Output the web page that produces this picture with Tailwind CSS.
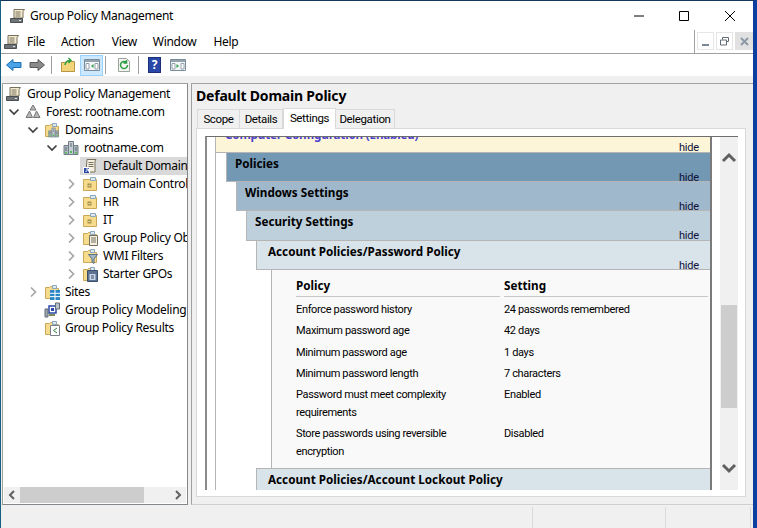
<!doctype html>
<html lang="en">
  <head>
    <meta charset="UTF-8" />
    <title>Group Policy Management</title>
    <script src="https://cdn.jsdelivr.net/npm/@tailwindcss/browser@4"></script>
  </head>
  <body class="w-[757px] h-[528px] overflow-hidden bg-white font-['Noto_Sans',sans-serif] text-[12px] tracking-[-0.3px] text-black">
    <svg class="hidden" xmlns="http://www.w3.org/2000/svg">
      <symbol id="scroll" viewBox="0 0 16 16">
        <path d="M4 1.500h10.500L13 3.500V10H4z" fill="#f3ead0" stroke="#77705c" />
        <path d="M5.500 4h5M5.500 6h5M5.500 8h5" stroke="#77705c" />
        <path d="M.5 10.500h12v4H.5z" fill="#6e7478" stroke="#4b4f52" />
        <path d="M9 12.500h2" stroke="#e8e8e8" />
      </symbol>
      <symbol id="folder" viewBox="0 0 16 16">
        <path d="M1.500 3.500h4l1-1h5v2h3v10h-13z" fill="#f6dc8c" stroke="#c9a858" />
        <path d="M8.500 1.500h4v3h-4z" fill="#dfe8f0" stroke="#8ba7bd" />
      </symbol>
      <symbol id="ou" viewBox="0 0 16 16">
        <path d="M1.500 3.500h13v11h-13z" fill="#f6dc8c" stroke="#c9a858" />
        <path d="M8.500 1.500h5v3h-5z" fill="#dfe8f0" stroke="#8ba7bd" />
        <path d="M5.500 7.500h4v4h-4z" fill="#a8924e" />
        <path d="M6.500 9h2v1h-2z" fill="#f3e3aa" />
      </symbol>
      <symbol id="server" viewBox="0 0 16 16">
        <path d="M5.500 1.500h5v13h-5z" fill="#c4cdd3" stroke="#6f7c85" />
        <path d="M1 5.500h4.500v9H1zM10.500 5.500H15v9h-4.500z" fill="#aeb9c0" stroke="#6f7c85" />
        <path d="M7 4h2M7 6h2M2 8h2M12 8h2M2 10h2M12 10h2" stroke="#5d6a73" />
        <path d="M7 11h2v2H7zM2 12h2v1.500H2zM12 12h2v1.500h-2z" fill="#4fc04f" />
      </symbol>
      <symbol id="chev-r" viewBox="0 0 16 16">
        <path d="M6 3.500 10.500 8 6 12.500" fill="none" stroke="#a6a6a6" stroke-width="1.700" />
      </symbol>
      <symbol id="chev-d" viewBox="0 0 16 16">
        <path d="M3.500 5.500 8 10l4.500-4.500" fill="none" stroke="#404040" stroke-width="1.700" />
      </symbol>
      <symbol id="panel" viewBox="0 0 16 16">
        <path d="M.5 2.500h15v11H.5z" fill="#f4f6f8" stroke="#7b8c98" />
        <path d="M1 3h14v2H1z" fill="#93a3ae" />
        <path d="M2 6.500h3v5.500H2zM11 6.500h3v5.500h-3z" fill="#fff" stroke="#93a3ae" />
      </symbol>
    </svg>

    <div class="flex flex-col h-[528px] border-l border-l-[#16607f] border-t border-t-[#12385e] border-r-4 border-r-[#0b3fa0]">
      <!-- title bar -->
      <div class="flex items-center h-[29px] shrink-0 pl-[9px]">
        <svg class="w-4 h-4 mr-[4px] shrink-0"><use href="#scroll" /></svg>
        <span>Group Policy Management</span>
        <div class="ml-auto flex items-center">
          <svg class="w-[46px] h-[29px]" viewBox="0 0 46 29"><path d="M19 15h10" stroke="#000" /></svg>
          <svg class="w-[46px] h-[29px]" viewBox="0 0 46 29"><path d="M18.500 10.500h9v9h-9z" fill="none" stroke="#000" /></svg>
          <svg class="w-[46px] h-[29px]" viewBox="0 0 46 29"><path d="M18 10l10 10M28 10 18 20" stroke="#000" /></svg>
        </div>
      </div>

      <!-- menu -->
      <div class="flex h-[24px] shrink-0">
        <div class="flex flex-1 items-center pl-[3px] border-b border-r border-[#a0a0a0] h-[24px]">
          <svg class="w-4 h-4 mr-[7px] shrink-0"><use href="#scroll" /></svg>
          <span class="mr-[16px]">File</span>
          <span class="mr-[17px]">Action</span>
          <span class="mr-[16px]">View</span>
          <span class="mr-[17px]">Window</span>
          <span>Help</span>
        </div>
        <div class="flex gap-[2px] pl-[2px] pt-[2px] w-[58px] border-b border-[#a0a0a0]">
          <div class="w-[17px] h-[18px] border border-[#e6e6e6] flex items-end justify-center pb-[3px]"><div class="w-[7px] h-[2px] bg-[#7b8794]"></div></div>
          <div class="w-[17px] h-[18px] border border-[#e6e6e6] flex items-center justify-center">
            <svg class="w-[9px] h-[9px]" viewBox="0 0 9 9"><path d="M2.500 2.500v-2h6v4h-2M.5 3h6v5H.5z" fill="none" stroke="#5f6b76" /></svg>
          </div>
          <div class="w-[18px] h-[18px] bg-[#e1e1e1] flex items-center justify-center">
            <svg class="w-[9px] h-[9px]" viewBox="0 0 9 9"><path d="M1 1l7 7M8 1 1 8" stroke="#8d99a4" stroke-width="2" /></svg>
          </div>
        </div>
      </div>

      <!-- toolbar -->
      <div class="flex items-center h-[22px] shrink-0 pl-[5px]">
        <svg class="w-4 h-4" viewBox="0 0 16 16"><path d="M.5 8 7 2.500v3h8v5H7v3z" fill="#4aa3e6" stroke="#1d6fb5" /></svg>
        <svg class="w-4 h-4 ml-[7px]" viewBox="0 0 16 16"><path d="M15.500 8 9 2.500v3H1v5h8v3z" fill="#8a8a8a" stroke="#5a5a5a" /></svg>
        <div class="w-px h-[18px] bg-[#a0a0a0] ml-[6px]"></div>
        <svg class="w-4 h-4 ml-[8px]" viewBox="0 0 16 16"><path d="M1.500 5.500h5l1-1h7v10h-13z" fill="#f3d47a" stroke="#b59643" /><path d="M5 8c.5-3 2.500-4.500 5-4.500M8.500 1l2.500 2.500L8.500 6" fill="none" stroke="#2f9e44" stroke-width="1.500" /></svg>
        <div class="flex items-center justify-center w-[23px] h-[21px] ml-[4px] bg-[#cce8ff] border border-[#99d1ff]">
          <svg class="w-4 h-4" viewBox="0 0 16 16"><use href="#panel" /><path d="M9.500 7v4L7 9z" fill="#2f9e44" /></svg>
        </div>
        <div class="w-px h-[18px] bg-[#a0a0a0] ml-[2px]"></div>
        <svg class="w-4 h-4 ml-[10px]" viewBox="0 0 16 16"><path d="M2.500 1.500h8l3 3v10h-11z" fill="#f4f6f4" stroke="#9aa29a" /><path d="M11.500 8a3.500 3.500 0 1 1-1.200-2.600M10.500 3v3h-3" fill="none" stroke="#2f9e44" stroke-width="1.500" /></svg>
        <div class="w-px h-[18px] bg-[#a0a0a0] ml-[6px]"></div>
        <div class="flex items-center justify-center w-[13px] h-[16px] ml-[9px] bg-[#2a48a8] border border-[#1b2f78] text-white text-[12px] font-bold leading-none">?</div>
        <svg class="w-4 h-4 ml-[9px]" viewBox="0 0 16 16"><use href="#panel" /><path d="M6.500 7v4L9 9z" fill="#2f9e44" /></svg>
      </div>

      <!-- panes -->
      <div class="flex flex-1 min-h-0 bg-[#f0f0f0] pt-[7px] pl-px gap-[3px]">
        <!-- tree -->
        <div class="flex flex-col w-[186px] shrink-0 h-[422px] bg-white border border-[#82878c] border-t-[#a0a0a0] border-l-[#a0a0a0]">
          <div class="flex-1 overflow-hidden pt-px whitespace-nowrap">
            <div class="flex items-center h-[18px] pl-[3px]"><svg class="w-4 h-4 mr-[5px] shrink-0"><use href="#scroll" /></svg><span>Group Policy Management</span></div>
            <div class="flex items-center h-[18px] pl-[3px]">
              <svg class="w-4 h-4 mr-[3px] shrink-0"><use href="#chev-d" /></svg>
              <svg class="w-4 h-4 mr-[5px] shrink-0" viewBox="0 0 16 16"><path d="M8 1l3 5H5zM4.500 7l3 6.500H1zM11.500 7l3.500 6.500H8.500z" fill="#b7b7b7" stroke="#767676" /></svg>
              <span>Forest: rootname.com</span>
            </div>
            <div class="flex items-center h-[18px] pl-[22px]">
              <svg class="w-4 h-4 mr-[3px] shrink-0"><use href="#chev-d" /></svg>
              <div class="relative w-4 h-4 mr-[5px] shrink-0"><svg class="w-4 h-4"><use href="#folder" /></svg><svg class="absolute left-[4px] top-[5px] w-[11px] h-[11px]"><use href="#server" /></svg></div>
              <span>Domains</span>
            </div>
            <div class="flex items-center h-[18px] pl-[41px]">
              <svg class="w-4 h-4 mr-[3px] shrink-0"><use href="#chev-d" /></svg>
              <svg class="w-4 h-4 mr-[5px] shrink-0"><use href="#server" /></svg>
              <span>rootname.com</span>
            </div>
            <div class="flex items-center h-[18px] ml-[77px] pl-[2px] bg-[#d9d9d9]">
              <svg class="w-4 h-4 mr-[5px] shrink-0" viewBox="0 0 16 16"><path d="M5 1.500h9l-1 1.500v11H4z" fill="#f3f0e2" stroke="#77705c" /><path d="M6.500 4.500h5M6.500 6.500h5M6.500 8.500h5" stroke="#77705c" /><path d="M1 9h7v6H1z" fill="#fff" /><path d="M2 10h5v5H2z" fill="#2a48a8" /><path d="M3.500 14 6 11.500M4 11h2.500v2.500" stroke="#fff" fill="none" /></svg>
              <span>Default Domain Policy</span>
            </div>
            <div class="flex items-center h-[18px] pl-[60px]">
              <svg class="w-4 h-4 mr-[3px] shrink-0"><use href="#chev-r" /></svg>
              <svg class="w-4 h-4 mr-[5px] shrink-0"><use href="#ou" /></svg>
              <span>Domain Controllers</span>
            </div>
            <div class="flex items-center h-[18px] pl-[60px]">
              <svg class="w-4 h-4 mr-[3px] shrink-0"><use href="#chev-r" /></svg>
              <svg class="w-4 h-4 mr-[5px] shrink-0"><use href="#ou" /></svg>
              <span>HR</span>
            </div>
            <div class="flex items-center h-[18px] pl-[60px]">
              <svg class="w-4 h-4 mr-[3px] shrink-0"><use href="#chev-r" /></svg>
              <svg class="w-4 h-4 mr-[5px] shrink-0"><use href="#ou" /></svg>
              <span>IT</span>
            </div>
            <div class="flex items-center h-[18px] pl-[60px]">
              <svg class="w-4 h-4 mr-[3px] shrink-0"><use href="#chev-r" /></svg>
              <div class="relative w-4 h-4 mr-[5px] shrink-0"><svg class="w-4 h-4"><use href="#folder" /></svg><svg class="absolute left-[6px] top-[5px] w-[10px] h-[11px]" viewBox="0 0 10 11"><path d="M1.500.5h8v10h-8z" fill="#f3f0e2" stroke="#77705c" /><path d="M3 3h5M3 5h5M3 7h5" stroke="#77705c" /></svg></div>
              <span>Group Policy Objects</span>
            </div>
            <div class="flex items-center h-[18px] pl-[60px]">
              <svg class="w-4 h-4 mr-[3px] shrink-0"><use href="#chev-r" /></svg>
              <div class="relative w-4 h-4 mr-[5px] shrink-0"><svg class="w-4 h-4"><use href="#folder" /></svg><svg class="absolute left-[6px] top-[6px] w-[10px] h-[10px]" viewBox="0 0 10 10"><path d="M.5.5h9L6 5v4.500L4 8V5z" fill="#9fb4c4" stroke="#5f7484" /></svg></div>
              <span>WMI Filters</span>
            </div>
            <div class="flex items-center h-[18px] pl-[60px]">
              <svg class="w-4 h-4 mr-[3px] shrink-0"><use href="#chev-r" /></svg>
              <div class="relative w-4 h-4 mr-[5px] shrink-0"><svg class="w-4 h-4"><use href="#folder" /></svg><svg class="absolute left-[5px] top-[4px] w-[11px] h-[12px]" viewBox="0 0 11 12"><path d="M.5.5h10v11H.5z" fill="#5c7394" stroke="#3d4f6b" /><path d="M2.500 4h6v6h-6z" fill="#c9d6e6" /><path d="M4 6h3M4 8h3" stroke="#3d4f6b" /></svg></div>
              <span>Starter GPOs</span>
            </div>
            <div class="flex items-center h-[18px] pl-[22px]">
              <svg class="w-4 h-4 mr-[3px] shrink-0"><use href="#chev-r" /></svg>
              <div class="relative w-4 h-4 mr-[5px] shrink-0"><svg class="w-4 h-4"><use href="#folder" /></svg><svg class="absolute left-[6px] top-[6px] w-[10px] h-[10px]" viewBox="0 0 10 10"><path d="M0 0h10v10H0z" fill="#2b86c5" /><path d="M0 3.300h10M0 6.600h10M5 0v10" stroke="#fff" /></svg></div>
              <span>Sites</span>
            </div>
            <div class="flex items-center h-[18px] pl-[41px]">
              <svg class="w-4 h-4 mr-[5px] shrink-0" viewBox="0 0 16 16"><path d="M5 4h7v7H5z" fill="#fff" stroke="#2a48a8" stroke-width="1.500" /><path d="M1 7h3v8H1z" fill="#9aa5ad" stroke="#5f6b76" /><path d="M11.500 1h4v6h-4z" fill="#b9c3ca" stroke="#5f6b76" /><path d="M7 6h3v3H7z" fill="#2a48a8" /><path d="M5 13h6" stroke="#7c8a55" stroke-width="2" /></svg>
              <span>Group Policy Modeling</span>
            </div>
            <div class="flex items-center h-[18px] pl-[41px]">
              <div class="relative w-4 h-4 mr-[5px] shrink-0"><svg class="w-4 h-4"><use href="#folder" /></svg><svg class="absolute left-[6px] top-[5px] w-[10px] h-[11px]" viewBox="0 0 10 11"><path d="M.5.5h9v10h-9z" fill="#fff" stroke="#77808a" /><path d="M7 3 3.500 5.500 7 8" fill="none" stroke="#2f7f3f" /></svg></div>
              <span>Group Policy Results</span>
            </div>
          </div>
          <!-- tree scrollbar -->
          <div class="flex items-center h-[16px] mb-px mx-px bg-[#f0f0f0] shrink-0">
            <svg class="w-[16px] h-[16px]" viewBox="0 0 16 16"><path d="M10 4 6 8l4 4" fill="none" stroke="#606060" stroke-width="2" /></svg>
            <div class="w-[124px] h-[16px] bg-[#cdcdcd]"></div>
            <svg class="w-[16px] h-[16px] ml-auto" viewBox="0 0 16 16"><path d="M6 4l4 4-4 4" fill="none" stroke="#606060" stroke-width="2" /></svg>
          </div>
        </div>

        <!-- detail pane -->
        <div class="flex flex-col flex-1 min-w-0 h-[422px] border-t border-t-[#a0a0a0] border-l border-l-[#a0a0a0] border-b border-b-[#d0d0d0] pl-[4px] pr-[7px] pb-[7px]">
          <div class="h-[24px] shrink-0 flex items-center text-[14px] font-bold leading-none tracking-[-0.2px]">Default Domain Policy</div>
          <div class="flex h-[20px] shrink-0 items-end relative z-10 pl-px font-['Roboto',sans-serif] text-[11.500px] tracking-[-0.35px]">
            <div class="flex items-center justify-center w-[43px] h-[19px] pt-px border border-b-0 border-[#d9d9d9]">Scope</div>
            <div class="flex items-center justify-center w-[43px] h-[19px] pt-px border border-b-0 border-l-0 border-[#d9d9d9]">Details</div>
            <div class="flex items-center justify-center w-[53px] h-[21px] -mb-px bg-white border border-b-0 border-[#d9d9d9]">Settings</div>
            <div class="flex items-center justify-center w-[59px] h-[19px] pt-px border border-b-0 border-l-0 border-[#d9d9d9]">Delegation</div>
          </div>
          <!-- tab body -->
          <div class="flex-1 min-h-0 bg-white border border-[#d9d9d9] pt-[7px] pl-[8px] pr-[7px] pb-[6px]">
            <div class="flex h-full border-t border-t-[#6e6e6e] border-l-2 border-l-[#8a8a8a] overflow-hidden text-[11.700px] tracking-normal">
              <!-- report -->
              <div class="w-[505px] shrink-0 pl-[8px] border-r-2 border-r-[#7a7a7a]">
                <div class="h-full border-l border-l-[#b5b5b5] overflow-hidden">
                  <div class="relative h-[16px] bg-[#fdf5d8] border-b border-b-[#b5b5b5]">
                    <div class="h-[15px] overflow-hidden"><div class="-mt-[12px] pl-[9px] font-bold text-[#4a3fd0] leading-[18px] tracking-[-0.2px]">Computer Configuration (Enabled)</div></div>
                    <span class="absolute right-[11px] bottom-[-3px] leading-[14px] font-['Roboto',sans-serif] text-[11px] tracking-[-0.2px] text-[#10103a]">hide</span>
                  </div>
                  <div class="relative ml-[10px] h-[29px] bg-[#7398b4] border-l border-l-[#b5b5b5] border-b border-b-[#b5b5b5] pl-[8px] pt-px font-bold leading-[18px]">Policies<span class="absolute right-[11px] bottom-[-4px] leading-[14px] font-normal font-['Roboto',sans-serif] text-[11px] tracking-[-0.2px] text-[#10103a]">hide</span></div>
                  <div class="relative ml-[20px] h-[29px] bg-[#a0b8cb] border-l border-l-[#b5b5b5] border-b border-b-[#b5b5b5] pl-[8px] pt-px font-bold leading-[18px]">Windows Settings<span class="absolute right-[11px] bottom-[-4px] leading-[14px] font-normal font-['Roboto',sans-serif] text-[11px] tracking-[-0.2px] text-[#10103a]">hide</span></div>
                  <div class="relative ml-[30px] h-[30px] bg-[#bed0dc] border-l border-l-[#b5b5b5] border-b border-b-[#b5b5b5] pl-[8px] pt-px font-bold leading-[18px]">Security Settings<span class="absolute right-[11px] bottom-[-3px] leading-[14px] font-normal font-['Roboto',sans-serif] text-[11px] tracking-[-0.2px] text-[#10103a]">hide</span></div>
                  <div class="relative ml-[40px] h-[29px] bg-[#d9e3ea] border-l border-l-[#b5b5b5] border-b border-b-[#b5b5b5] pl-[11px] pt-px font-bold leading-[18px]">Account Policies/Password Policy<span class="absolute right-[11px] bottom-[-4px] leading-[14px] font-normal font-['Roboto',sans-serif] text-[11px] tracking-[-0.2px] text-[#10103a]">hide</span></div>
                  <!-- settings table -->
                  <div class="ml-[55px] h-[198px] bg-[#f9f9f9] border-l border-l-[#b5b5b5] pl-[24px] pt-[6px] font-['Roboto',sans-serif] text-[11px] tracking-[-0.35px] leading-[21.300px]">
                    <div class="grid grid-cols-[204px_204px] gap-x-[4px] font-['Noto_Sans',sans-serif] text-[11.700px] tracking-normal font-bold leading-[18px]">
                      <div class="pb-[2px] border-b border-b-[#c8c8c8]">Policy</div>
                      <div class="pb-[2px] border-b border-b-[#c8c8c8]">Setting</div>
                    </div>
                    <div class="grid grid-cols-[208px_200px] pt-[2px]">
                      <div>Enforce password history</div><div>24 passwords remembered</div>
                      <div>Maximum password age</div><div>42 days</div>
                      <div>Minimum password age</div><div>1 days</div>
                      <div>Minimum password length</div><div>7 characters</div>
                      <div class="leading-[18px] pt-[2px] pb-[2px] pr-[30px]">Password must meet complexity requirements</div><div class="leading-[18px] pt-[2px]">Enabled</div>
                      <div class="leading-[18px] pt-px pr-[30px]">Store passwords using reversible encryption</div><div class="leading-[18px] pt-px">Disabled</div>
                    </div>
                  </div>
                  <div class="relative ml-[40px] h-[30px] overflow-hidden bg-[#d9e3ea] border-l border-l-[#b5b5b5] border-t border-t-[#b5b5b5] pl-[11px] pt-px font-bold leading-[18px]">Account Policies/Account Lockout Policy<span class="absolute right-[11px] top-[19px] leading-[14px] font-normal font-['Roboto',sans-serif] text-[11px] tracking-[-0.2px] text-[#10103a]">hide</span></div>
                </div>
              </div>
              <!-- report scrollbar -->
              <div class="flex flex-col w-[18px] ml-[8px] bg-[#f0f0f0] shrink-0">
                <svg class="w-[18px] h-[17px] mt-[12px] shrink-0" viewBox="0 0 18 17"><path d="M3 12l6-6 6 6" fill="none" stroke="#606060" stroke-width="3" /></svg>
                <div class="w-[16px] h-[103px] mt-[139px] mx-px bg-[#cdcdcd] shrink-0"></div>
                <svg class="w-[18px] h-[17px] mt-[52px] shrink-0" viewBox="0 0 18 17"><path d="M3 5l6 6 6-6" fill="none" stroke="#606060" stroke-width="3" /></svg>
              </div>
            </div>
          </div>
        </div>
      </div>

      <!-- status bar -->
      <div class="flex h-[22px] shrink-0 bg-[#f0f0f0] border-t border-t-[#f0f0f0]">
        <div class="w-[532px] border-r border-r-[#dadada]"></div>
        <div class="w-[133px] border-r border-r-[#dadada]"></div>
        <div class="w-[85px] border-r border-r-[#dadada]"></div>
      </div>
    </div>
  </body>
</html>
